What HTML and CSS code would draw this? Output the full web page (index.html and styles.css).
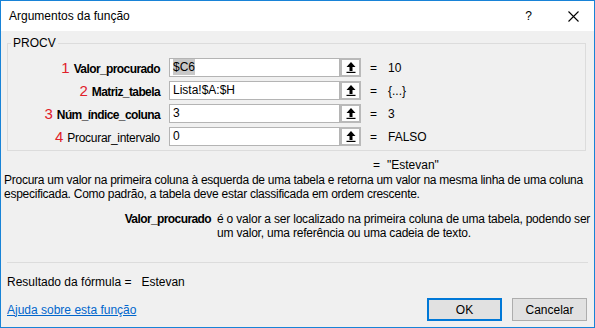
FILE: index.html
```html
<!DOCTYPE html>
<html lang="pt">
<head>
  <meta charset="UTF-8" />
  <title>Argumentos da função</title>
  <link rel="stylesheet" href="styles.css">
</head>
<body>
  <!-- janela do diálogo -->
  <div class="dialog">
    <div class="titlebar">
      <span class="title">Argumentos da função</span>
      <span class="help">?</span>
      <span class="close">
        <svg width="11" height="11" viewBox="0 0 11 11"><path d="M0.5 0.5 L10.5 10.5 M10.5 0.5 L0.5 10.5" stroke="#000" stroke-width="1.1" fill="none"/></svg>
      </span>
    </div>

    <div class="content">
      <!-- argumentos da função -->
      <fieldset class="group">
        <legend>PROCV</legend>
        <div class="args">
          <div class="arg-label"><span class="num">1</span><b>Valor_procurado</b></div>
          <div class="arg-input"><span class="sel">$C6</span></div>
          <button class="ref-btn"><svg width="10" height="11" viewBox="0 0 10 11"><path d="M5 0 L9.5 5 H6.5 V9 H3.5 V5 H0.5 Z" fill="#000"/><rect x="0.5" y="9.8" width="9" height="1.2" fill="#000"/></svg></button>
          <span class="eq">=</span>
          <span class="arg-value">10</span>

          <div class="arg-label"><span class="num">2</span><b>Matriz_tabela</b></div>
          <div class="arg-input">Lista!$A:$H</div>
          <button class="ref-btn"><svg width="10" height="11" viewBox="0 0 10 11"><path d="M5 0 L9.5 5 H6.5 V9 H3.5 V5 H0.5 Z" fill="#000"/><rect x="0.5" y="9.8" width="9" height="1.2" fill="#000"/></svg></button>
          <span class="eq">=</span>
          <span class="arg-value">{...}</span>

          <div class="arg-label"><span class="num">3</span><b>Núm_índice_coluna</b></div>
          <div class="arg-input">3</div>
          <button class="ref-btn"><svg width="10" height="11" viewBox="0 0 10 11"><path d="M5 0 L9.5 5 H6.5 V9 H3.5 V5 H0.5 Z" fill="#000"/><rect x="0.5" y="9.8" width="9" height="1.2" fill="#000"/></svg></button>
          <span class="eq">=</span>
          <span class="arg-value">3</span>

          <div class="arg-label"><span class="num">4</span><span class="opt">Procurar_intervalo</span></div>
          <div class="arg-input">0</div>
          <button class="ref-btn"><svg width="10" height="11" viewBox="0 0 10 11"><path d="M5 0 L9.5 5 H6.5 V9 H3.5 V5 H0.5 Z" fill="#000"/><rect x="0.5" y="9.8" width="9" height="1.2" fill="#000"/></svg></button>
          <span class="eq">=</span>
          <span class="arg-value">FALSO</span>
        </div>
      </fieldset>

      <div class="result-line"><span class="eq">=</span><span>"Estevan"</span></div>

      <p class="func-desc">Procura um valor na primeira coluna à esquerda de uma tabela e retorna um valor na mesma linha de uma coluna especificada. Como padrão, a tabela deve estar classificada em ordem crescente.</p>

      <div class="arg-help">
        <b>Valor_procurado</b>
        <p>é o valor a ser localizado na primeira coluna de uma tabela, podendo ser um valor, uma referência ou uma cadeia de texto.</p>
      </div>

      <div class="separator"></div>

      <div class="formula-result">Resultado da fórmula =<span class="formula-value">Estevan</span></div>

      <div class="footer">
        <a href="#" class="help-link">Ajuda sobre esta função</a>
        <div class="buttons">
          <button class="btn btn-ok">OK</button>
          <button class="btn">Cancelar</button>
        </div>
      </div>
    </div>
  </div>
</body>
</html>
```

FILE: styles.css
```css
/* ---------- base ---------- */
body {
  margin: 0;
  font-family: "Liberation Sans", Arial, sans-serif;
  font-size: 12px;
  color: #000;
  background: #f0f0f0;
}

/* ---------- janela ---------- */
.dialog {
  width: 595px;
  height: 328px;
  box-sizing: border-box;
  border: 1px solid #1883d7;
  background: #f0f0f0;
  display: flex;
  flex-direction: column;
}

.titlebar {
  height: 30px;
  background: #fff;
  display: flex;
  align-items: center;
  padding-left: 8px;
}

.title {
  flex: 1;
  font-size: 12px;
}

.help {
  font-size: 12px;
  margin-right: 36px;
}

.close {
  display: flex;
  margin-right: 15px;
}

.content {
  flex: 1;
  display: flex;
  flex-direction: column;
}

/* ---------- grupo de argumentos ---------- */
.group {
  margin: 5px 8px 0 6px;
  padding: 8px 0 4px 0;
  border: 1px solid #dcdcdc;
}

.group legend {
  margin-left: 3px;
  padding: 0 2px;
  line-height: 14px;
}

.args {
  display: grid;
  grid-template-columns: 152px 180px 21px 27px 1fr;
  grid-auto-rows: 19px;
  row-gap: 4px;
  align-items: center;
}

.arg-label {
  text-align: right;
  white-space: nowrap;
}

.arg-label b {
  letter-spacing: -0.6px;
}

.arg-label .opt {
  letter-spacing: -0.3px;
}

.num {
  color: #e0202a;
  font-size: 15px;
  margin-right: 4px;
}

.arg-input {
  margin-left: 9px;
  height: 19px;
  box-sizing: border-box;
  border: 1px solid #b4b4b4;
  background: #fff;
  padding: 0 3px;
  line-height: 17px;
  white-space: nowrap;
  overflow: hidden;
}

.sel {
  background: #c8c8c8;
  padding: 1px 0;
}

.ref-btn {
  width: 21px;
  height: 19px;
  box-sizing: border-box;
  border: 2px solid #b9b9b9;
  background: #fdfdfd;
  padding: 0;
  display: flex;
  align-items: center;
  justify-content: center;
}

.eq {
  padding-left: 9px;
}

/* ---------- descrição ---------- */
.result-line {
  margin-top: 7px;
  line-height: 15px;
  display: flex;
}

.result-line .eq {
  padding-left: 372px;
  width: 14px;
}

.func-desc {
  margin: 0 0 0 3px;
  line-height: 14px;
  letter-spacing: -0.26px;
}

.arg-help {
  display: grid;
  grid-template-columns: 210px 1fr;
  column-gap: 6px;
  margin-top: 11px;
  line-height: 14px;
}

.arg-help b {
  text-align: right;
  letter-spacing: -0.6px;
}

.arg-help p {
  margin: 0;
  letter-spacing: -0.2px;
}

.separator {
  margin: 22px 6px 0 6px;
  border-top: 1px solid #dcdcdc;
}

.formula-result {
  margin: 12px 0 0 6px;
  line-height: 15px;
}

.formula-value {
  margin-left: 10px;
}

/* ---------- rodapé ---------- */
.footer {
  display: flex;
  align-items: center;
  justify-content: space-between;
  margin: 8px 7px 0 6px;
}

.help-link {
  color: #0066cc;
  text-decoration: underline;
}

.buttons {
  display: flex;
  gap: 10px;
}

.btn {
  width: 75px;
  height: 23px;
  box-sizing: border-box;
  border: 1px solid #adadad;
  background: #e1e1e1;
  font-family: inherit;
  font-size: 12px;
  padding: 0;
}

.btn-ok {
  border: 2px solid #0078d7;
}
```
